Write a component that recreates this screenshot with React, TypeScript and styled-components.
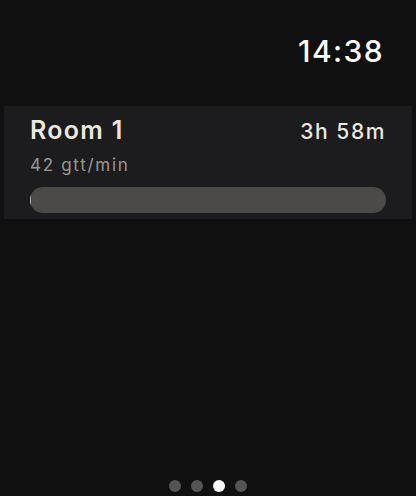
import React from 'react'
import styled, { createGlobalStyle } from 'styled-components'

const GlobalStyle = createGlobalStyle`
  html, body {
    margin: 0;
    padding: 0;
    background: #101010;
  }
  body {
    font-family: Inter, "Noto Sans", sans-serif;
    -webkit-font-smoothing: antialiased;
  }
`

const Screen = styled.div`
  width: 416px;
  height: 496px;
  background: #101010;
  display: flex;
  flex-direction: column;
  box-sizing: border-box;
  overflow: hidden;
`

const StatusBar = styled.div`
  display: flex;
  justify-content: flex-end;
  padding: 33px 32px 0 0;
  height: 73px;
  box-sizing: border-box;
`

const Clock = styled.span`
  color: #ffffff;
  font-size: 30px;
  font-weight: 500;
  letter-spacing: 1.4px;
  line-height: 36px;
`

const Content = styled.div`
  flex: 1;
  padding: 33px 4px 0;
`

const Card = styled.div`
  background: #1c1c1e;
  padding: 10px 26px 6px 26px;
  display: flex;
  flex-direction: column;
`

const TopRow = styled.div`
  display: flex;
  justify-content: space-between;
  align-items: baseline;
`

const Title = styled.span`
  color: #ece8df;
  font-size: 25px;
  font-weight: 600;
  letter-spacing: 1.3px;
  line-height: 28px;
`

const Remaining = styled.span`
  color: #ece8df;
  font-size: 21px;
  font-weight: 500;
  letter-spacing: 1.6px;
`

const Rate = styled.span`
  margin-top: 11px;
  color: #9b9790;
  font-size: 17px;
  letter-spacing: 1.7px;
  line-height: 20px;
`

const Track = styled.div`
  margin-top: 12px;
  height: 26px;
  border-radius: 13px;
  background: #4b4a46;
  overflow: hidden;
  display: flex;
`

const Fill = styled.div`
  height: 100%;
  background: #b8b5ad;
  border-radius: 13px 0 0 13px;
`

const Pager = styled.div`
  display: flex;
  justify-content: center;
  gap: 10px;
  padding-bottom: 4px;
`

const Dot = styled.span<{ $active?: boolean }>`
  width: 12px;
  height: 12px;
  border-radius: 50%;
  background: ${p => (p.$active ? '#ffffff' : '#555555')};
`

export default function App() {
  const progress = 0.004
  return (
    <Screen>
      <GlobalStyle />
      <StatusBar>
        <Clock>14:38</Clock>
      </StatusBar>
      <Content>
        <Card>
          <TopRow>
            <Title>Room 1</Title>
            <Remaining>3h 58m</Remaining>
          </TopRow>
          <Rate>42 gtt/min</Rate>
          <Track>
            <Fill style={{ width: `${progress * 100}%` }} />
          </Track>
        </Card>
      </Content>
      <Pager>
        {[0, 1, 2, 3].map(i => (
          <Dot key={i} $active={i === 2} />
        ))}
      </Pager>
    </Screen>
  )
}
